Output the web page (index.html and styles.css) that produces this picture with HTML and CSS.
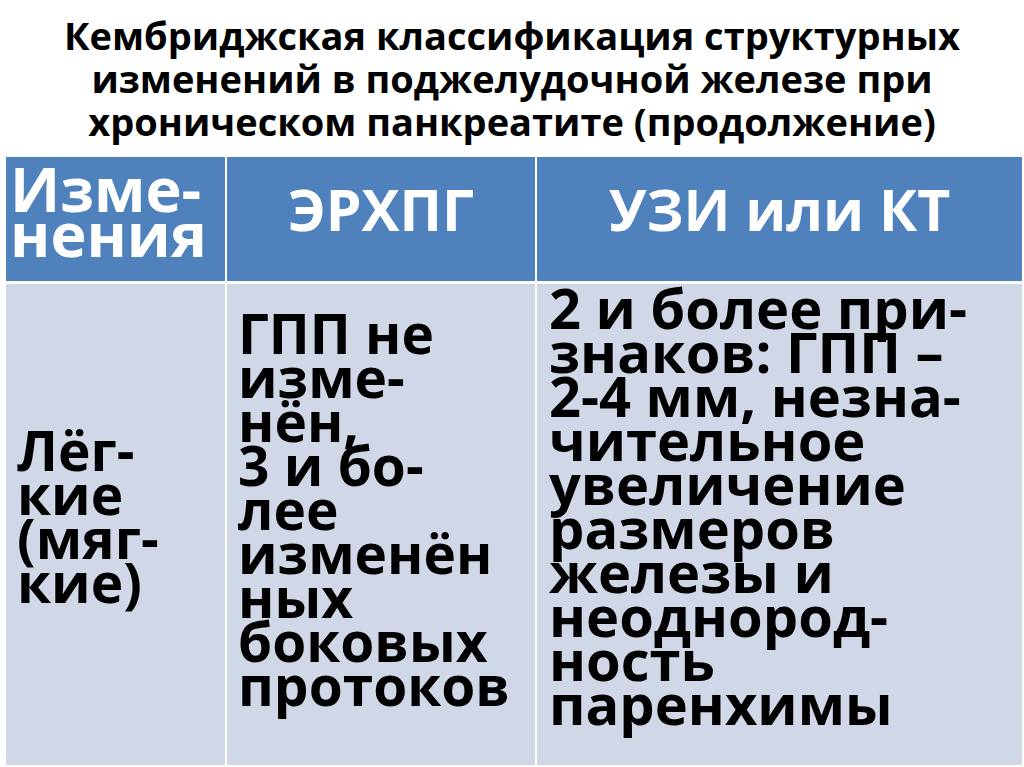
FILE: index.html
```html
<!DOCTYPE html>
<html lang="ru">
<head>
<meta charset="utf-8">
<title>Кембриджская классификация</title>
<link rel="stylesheet" href="styles.css">
</head>
<body>
<div class="slide">
  <h1 class="title">Кембриджская классификация структурных<br>изменений в поджелудочной железе при<br>хроническом панкреатите (продолжение)</h1>
  <div class="table">
    <div class="cell head head-first">Изме-<br>нения</div>
    <div class="cell head head-center">ЭРХПГ</div>
    <div class="cell head head-center">УЗИ или КТ</div>
    <div class="cell body body-1">Лёг-<br>кие<br>(мяг-<br>кие)</div>
    <div class="cell body body-2">ГПП не<br>изме-<br>нён,<br>3 и бо-<br>лее<br>изменён<br>ных<br>боковых<br>протоков</div>
    <div class="cell body body-3">2 и более при-<br>знаков: ГПП –<br>2-4 мм, незна-<br>чительное<br>увеличение<br>размеров<br>железы и<br>неоднород-<br>ность<br>паренхимы</div>
  </div>
</div>
</body>
</html>
```

FILE: styles.css
```css
html, body {
  margin: 0;
  padding: 0;
  background: #ffffff;
}

.slide {
  width: 1024px;
  height: 767px;
  overflow: hidden;
  font-family: "Open Sans", "DejaVu Sans", sans-serif;
  font-weight: 700;
  background: #ffffff;
}

.title {
  margin: 0;
  padding-top: 14px;
  height: 157px;
  box-sizing: border-box;
  font-size: 38px;
  line-height: 43px;
  font-weight: 700;
  text-align: center;
  color: #000000;
  white-space: nowrap;
}

.table {
  margin-left: 6px;
  width: 1016px;
  display: grid;
  grid-template-columns: 219px 308px 485px;
  grid-template-rows: 124px 481px;
  column-gap: 2px;
  row-gap: 3px;
}

.cell {
  white-space: nowrap;
  box-sizing: border-box;
  overflow: visible;
}

.head {
  background: #4f81bd;
  color: #ffffff;
  font-size: 57px;
  line-height: 45px;
}

.head-first {
  font-size: 61px;
  padding: 9px 0 0 4px;
}

.head-center {
  padding-top: 30px;
  text-align: center;
}

.body {
  background: #d0d8e8;
  color: #000000;
  font-size: 55px;
  line-height: 44px;
}

.body-1 {
  padding: 144px 0 0 11px;
}

.body-2 {
  padding: 27px 0 0 11px;
}

.body-3 {
  font-size: 56px;
  padding: 1px 0 0 12px;
}
```
